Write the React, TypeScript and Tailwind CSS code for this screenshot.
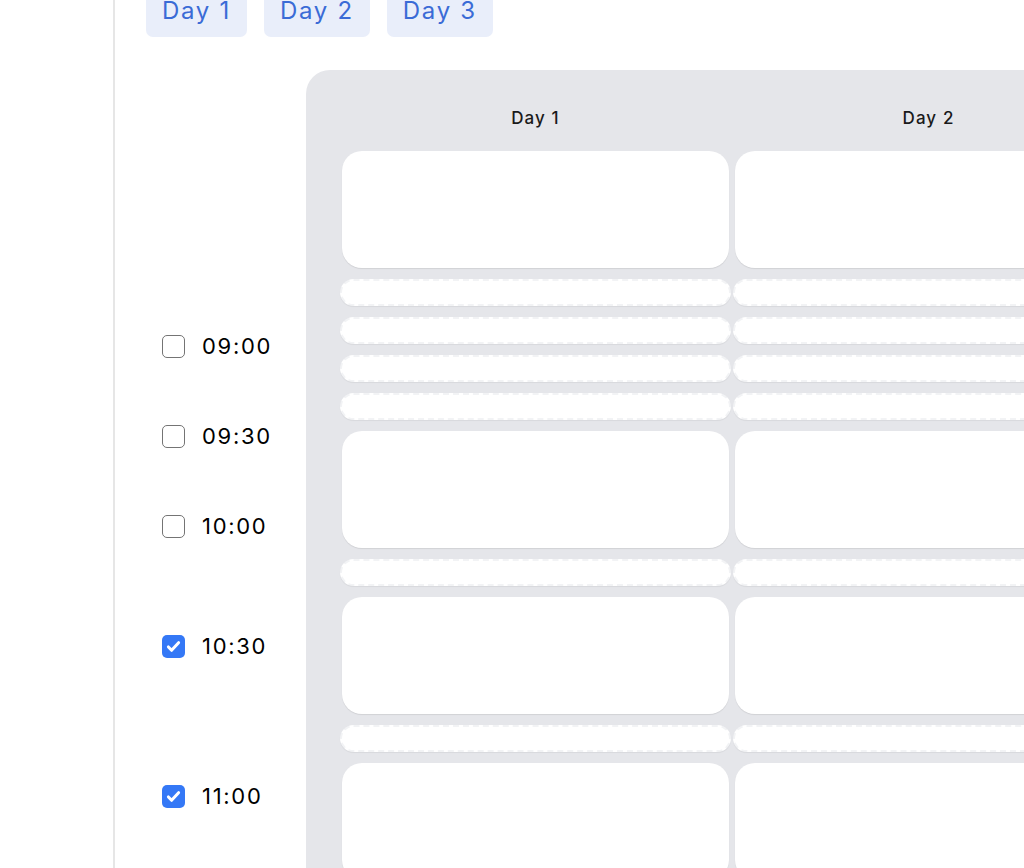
import React from 'react';

const days = ['Day 1', 'Day 2', 'Day 3'];

const times = [
  { label: '09:00', checked: false, gap: 'mt-0' },
  { label: '09:30', checked: false, gap: 'mt-[66px]' },
  { label: '10:00', checked: false, gap: 'mt-[66px]' },
  { label: '10:30', checked: true, gap: 'mt-[96px]' },
  { label: '11:00', checked: true, gap: 'mt-[126px]' },
];

// column body: big cards and dashed empty slots
const blocks: Array<'card' | 'slot'> = [
  'card', 'slot', 'slot', 'slot', 'slot',
  'card', 'slot',
  'card', 'slot',
  'card',
];

function Checkbox({ checked }: { checked: boolean }) {
  if (checked) {
    return (
      <div className="w-[23px] h-[23px] rounded-[5px] bg-[#3478f6] flex items-center justify-center shrink-0">
        <svg width="17" height="17" viewBox="0 0 16 16" fill="none">
          <path d="M3.2 8.4l3 3.2L12.8 4.4" stroke="white" strokeWidth="2.8" strokeLinecap="round" strokeLinejoin="round" />
        </svg>
      </div>
    );
  }
  return <div className="w-[23px] h-[23px] rounded-[5px] border-[1.5px] border-[#747474] bg-white shrink-0" />;
}

function DayColumn({ title }: { title: string }) {
  return (
    <div className="w-[387px] shrink-0 flex flex-col">
      <div className="h-[81px] pt-[38px] text-center text-[17px] leading-5 font-medium tracking-[1.1px] text-[#1a1a1a]">{title}</div>
      <div className="flex flex-col gap-[11px]">
        {blocks.map((b, i) =>
          b === 'card' ? (
            <div key={i} className="h-[117px] rounded-[20px] bg-white shadow-[0_1px_1px_rgba(0,0,0,0.09)]" />
          ) : (
            <div
              key={i}
              className="h-[27px] -mx-[2px] rounded-full bg-white border-2 border-dashed border-[#f2f3f5] shadow-[0_1px_1px_rgba(0,0,0,0.06)]"
            />
          )
        )}
      </div>
    </div>
  );
}

export default function App() {
  return (
    <div className="w-full h-[868px] overflow-hidden bg-white flex" style={{ fontFamily: 'Inter, "Noto Sans", sans-serif' }}>
      <div className="w-[115px] shrink-0 border-r-2 border-[#e6e6e6]" />
      <div className="flex-1 min-w-0 pl-[31px] flex flex-col">
        <div className="flex gap-[17px] -mt-[15px]">
          {days.map((d) => (
            <div key={d} className="h-[52px] px-4 flex items-center rounded-[7px] bg-[#e9eefa] text-[24px] leading-8 tracking-[1.7px] text-[#3a6bd6]">
              {d}
            </div>
          ))}
        </div>
        <div className="flex mt-[33px] flex-1">
          <div className="w-[160px] shrink-0 pl-4 pt-[264px] flex flex-col">
            {times.map((t) => (
              <div key={t.label} className={`${t.gap} h-[24px] flex items-center gap-[17px]`}>
                <Checkbox checked={t.checked} />
                <span className="text-[22px] leading-none text-black tracking-[1.7px]">{t.label}</span>
              </div>
            ))}
          </div>
          <div className="flex-1 rounded-tl-[24px] bg-[#e5e6ea] pl-[36px] flex gap-[6px] overflow-hidden">
            <DayColumn title="Day 1" />
            <DayColumn title="Day 2" />
            <DayColumn title="Day 3" />
          </div>
        </div>
      </div>
    </div>
  );
}
